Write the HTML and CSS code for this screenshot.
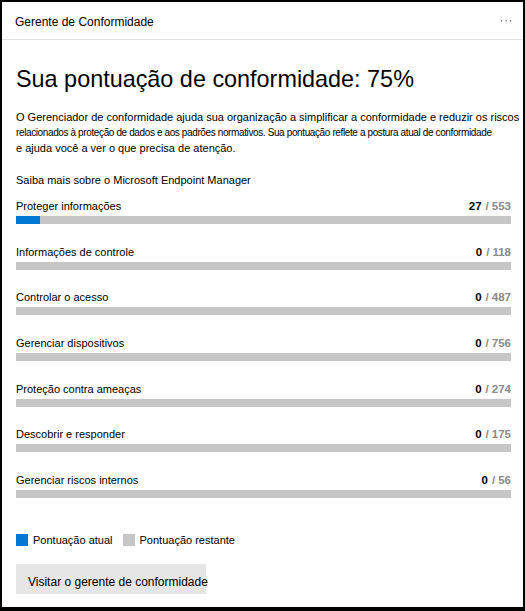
FILE: index.html
```html
<!DOCTYPE html>
<html lang="pt-BR">
<head>
<meta charset="utf-8">
<title>Gerente de Conformidade</title>
<link rel="stylesheet" href="styles.css">
</head>
<body>
<div class="card">
  <div class="header">
    <span class="header-title">Gerente de Conformidade</span>
    <svg class="more" width="12" height="4" viewBox="0 0 12 4" aria-hidden="true">
      <rect x="1" y="1" width="1.2" height="1.6" fill="#7a7a7a"/>
      <rect x="5.5" y="1" width="1.2" height="1.6" fill="#7a7a7a"/>
      <rect x="10" y="1" width="1.2" height="1.6" fill="#7a7a7a"/>
    </svg>
  </div>
  <div class="body">
    <h1 class="title">Sua pontuação de conformidade: 75%</h1>
    <p class="desc">O Gerenciador de conformidade ajuda sua organização a simplificar a conformidade e reduzir os riscos<br><span class="tight">relacionados à proteção de dados e aos padrões normativos. Sua pontuação reflete a postura atual de conformidade</span><br>e ajuda você a ver o que precisa de atenção.</p>
    <div class="link">Saiba mais sobre o Microsoft Endpoint Manager</div>

    <div class="rows">
      <div class="row">
        <div class="row-head"><span>Proteger informações</span><span class="score"><b>27</b><span class="slash">/</span><span class="total">553</span></span></div>
        <div class="bar"><div class="fill" style="width:4.88%"></div></div>
      </div>
      <div class="row">
        <div class="row-head"><span>Informações de controle</span><span class="score"><b>0</b><span class="slash">/</span><span class="total">118</span></span></div>
        <div class="bar"><div class="fill" style="width:0%"></div></div>
      </div>
      <div class="row">
        <div class="row-head"><span>Controlar o acesso</span><span class="score"><b>0</b><span class="slash">/</span><span class="total">487</span></span></div>
        <div class="bar"><div class="fill" style="width:0%"></div></div>
      </div>
      <div class="row">
        <div class="row-head"><span>Gerenciar dispositivos</span><span class="score"><b>0</b><span class="slash">/</span><span class="total">756</span></span></div>
        <div class="bar"><div class="fill" style="width:0%"></div></div>
      </div>
      <div class="row">
        <div class="row-head"><span>Proteção contra ameaças</span><span class="score"><b>0</b><span class="slash">/</span><span class="total">274</span></span></div>
        <div class="bar"><div class="fill" style="width:0%"></div></div>
      </div>
      <div class="row">
        <div class="row-head"><span>Descobrir e responder</span><span class="score"><b>0</b><span class="slash">/</span><span class="total">175</span></span></div>
        <div class="bar"><div class="fill" style="width:0%"></div></div>
      </div>
      <div class="row">
        <div class="row-head"><span>Gerenciar riscos internos</span><span class="score"><b>0</b><span class="slash">/</span><span class="total">56</span></span></div>
        <div class="bar"><div class="fill" style="width:0%"></div></div>
      </div>
    </div>

    <div class="legend">
      <span class="swatch swatch-current"></span><span class="legend-label">Pontuação atual</span>
      <span class="swatch swatch-remaining"></span><span class="legend-label">Pontuação restante</span>
    </div>

    <button class="btn">Visitar o gerente de conformidade</button>
  </div>
</div>
</body>
</html>
```

FILE: styles.css
```css
html, body {
  margin: 0;
  padding: 0;
  background: #000;
}

body {
  font-family: "Liberation Sans", Arial, sans-serif;
  color: #000;
}

.card {
  margin: 2px 2px 0 2px;
  width: 521px;
  height: 605px;
  background: #fff;
  box-sizing: border-box;
}

.header {
  height: 37px;
  box-sizing: content-box;
  border-bottom: 1px solid #e3e3e3;
  padding: 0 11px 0 13px;
  display: flex;
  justify-content: space-between;
  align-items: flex-start;
}

.header-title {
  font-size: 12px;
  line-height: 14px;
  padding-top: 13px;
}

.more {
  margin-top: 17px;
}

.body {
  padding: 0 12px 0 14px;
}

.title {
  margin: 25px 0 0 0;
  font-weight: normal;
  font-size: 23.4px;
  line-height: 28px;
  letter-spacing: 0;
}

.desc {
  margin: 16.5px 0 0 0;
  font-size: 11px;
  line-height: 15.5px;
  white-space: nowrap;
  color: #000;
}

.tight {
  font-size: 10px;
  letter-spacing: -0.38px;
}

.link {
  margin-top: 17px;
  font-size: 11px;
  line-height: 15px;
}

.rows {
  margin-top: 12px;
  display: flex;
  flex-direction: column;
  gap: 21.67px;
}

.row-head {
  display: flex;
  justify-content: space-between;
  font-size: 11px;
  line-height: 13px;
}

.score {
  font-weight: bold;
  font-size: 11.5px;
}

.slash {
  color: #8a8a8a;
  margin: 0 3px 0 4px;
}

.total {
  color: #8a8a8a;
}

.bar {
  margin-top: 3px;
  height: 8px;
  background: #c6c6c6;
}

.fill {
  height: 100%;
  background: #0078d4;
}

.legend {
  margin-top: 36px;
  display: flex;
  align-items: center;
  font-size: 11px;
  line-height: 12px;
}

.swatch {
  width: 12px;
  height: 12px;
  margin-right: 5px;
}

.swatch-current {
  background: #0078d4;
}

.swatch-remaining {
  background: #c6c6c6;
  margin-left: 10px;
}

.btn {
  margin-top: 18px;
  width: 190px;
  height: 30px;
  padding: 6px 0 0 12px;
  border: none;
  background: #e6e6e6;
  font-family: "Liberation Sans", Arial, sans-serif;
  font-size: 12px;
  line-height: 18px;
  text-align: left;
  white-space: nowrap;
  color: #000;
  display: block;
  box-sizing: border-box;
}
```
